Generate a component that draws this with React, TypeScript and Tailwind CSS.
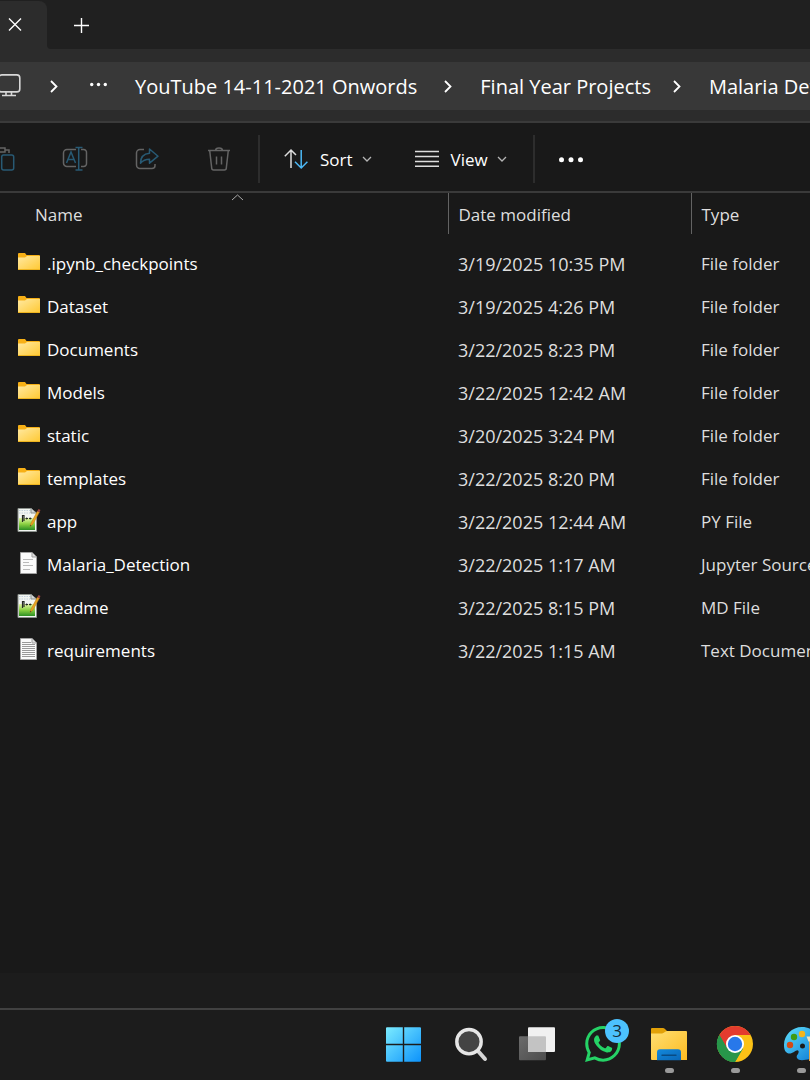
import type { ReactNode } from "react";
import { SiWhatsapp } from "react-icons/si";

type FileKind = "folder" | "editor" | "page" | "text";

const files: { name: string; modified: string; type: string; kind: FileKind }[] = [
  { name: ".ipynb_checkpoints", modified: "3/19/2025 10:35 PM", type: "File folder", kind: "folder" },
  { name: "Dataset", modified: "3/19/2025 4:26 PM", type: "File folder", kind: "folder" },
  { name: "Documents", modified: "3/22/2025 8:23 PM", type: "File folder", kind: "folder" },
  { name: "Models", modified: "3/22/2025 12:42 AM", type: "File folder", kind: "folder" },
  { name: "static", modified: "3/20/2025 3:24 PM", type: "File folder", kind: "folder" },
  { name: "templates", modified: "3/22/2025 8:20 PM", type: "File folder", kind: "folder" },
  { name: "app", modified: "3/22/2025 12:44 AM", type: "PY File", kind: "editor" },
  { name: "Malaria_Detection", modified: "3/22/2025 1:17 AM", type: "Jupyter Source File", kind: "page" },
  { name: "readme", modified: "3/22/2025 8:15 PM", type: "MD File", kind: "editor" },
  { name: "requirements", modified: "3/22/2025 1:15 AM", type: "Text Document", kind: "text" },
];

function FolderIcon() {
  return (
    <>
      <path d="M1 4a1 1 0 0 1 1-1h6l1.500 2H22a1 1 0 0 1 1 1v5H1z" fill="#f7b016" />
      <path d="M1 7.500h7l2-1.500h13v13.500H1z" fill="url(#folder-face)" />
      <path d="M1 19.500h22" stroke="#eeb41f" />
    </>
  );
}

function EditorIcon() {
  return (
    <>
      <path d="M1 .5H14L19.500 5v18.500H1z" fill="#f2f5f2" stroke="#8d938e" />
      <path d="M2 10h16v12H2z" fill="url(#editor-face)" />
      <path d="M2 2.500h12M2 5h13" stroke="#c3d2dc" strokeDasharray="1.500 1" />
      <path d="M14 .5V5h5" fill="#d3d7d9" stroke="#8d938e" />
      <path d="M5.500 14V7.500h1.500V13" fill="none" stroke="#252b24" strokeWidth="1.200" />
      <path d="M8.500 10.500h2.500M12 10.500h2.500M9.700 9.500v2M13.200 9.500v2" stroke="#252b24" />
      <path d="m13 18.500 1-3.500L20.500 3l2 1-6.500 12z" fill="#e8a323" stroke="#b67b18" strokeWidth=".5" />
      <path d="m20.300 3.500 1.200-2.500 2 1-1.300 2.500z" fill="#9d4540" />
      <path d="m13 18.500.4-1.600 1 .6z" fill="#333" />
    </>
  );
}

function PageIcon({ dense = false }: { dense?: boolean }) {
  return (
    <>
      <path d="M3.500 1.500H15L19.500 6v16.500h-16z" fill="#fafafa" stroke="#a1a1a1" />
      <path d="M15 1.500V6h4.500" fill="#e0e0e0" stroke="#a1a1a1" />
      {dense ? (
        <path d="M5 5.500h9M5 7.500h13M5 9.500h13M5 11.500h13M5 13.500h13M5 15.500h13M5 17.500h13M5 19.500h13" stroke="#999" />
      ) : (
        <path d="M6 8.500h10M6 11.500h6M6 14.500h10M6 18.500h7" stroke="#b9b9b9" />
      )}
    </>
  );
}

function FileIcon({ kind }: { kind: FileKind }) {
  return (
    <svg aria-hidden="true" className="h-7 w-6 shrink-0" viewBox="0 0 24 28">
      {kind === "folder" && <FolderIcon />}
      {kind === "editor" && <EditorIcon />}
      {kind === "page" && <PageIcon />}
      {kind === "text" && <PageIcon dense />}
    </svg>
  );
}

function SharedGradients() {
  return (
    <svg aria-hidden="true" className="absolute size-0">
      <defs>
        <linearGradient id="folder-face" x1="0" x2="1" y1="0" y2="1">
          <stop offset="0" stopColor="#ffe9a2" />
          <stop offset="1" stopColor="#ffc933" />
        </linearGradient>
        <linearGradient id="editor-face" x1="0" x2="0" y1="0" y2="1">
          <stop offset="0" stopColor="#e4f7a9" />
          <stop offset=".5" stopColor="#8bd142" />
          <stop offset="1" stopColor="#2c8f24" />
        </linearGradient>
      </defs>
    </svg>
  );
}

function Separator() {
  return (
    <svg aria-hidden="true" className="h-4 w-[10px] shrink-0" fill="none" viewBox="0 0 10 16">
      <path d="m2 3 5.500 5.500L2 14" stroke="#fff" strokeWidth="1.800" />
    </svg>
  );
}

function Caret() {
  return (
    <svg aria-hidden="true" className="h-[10px] w-[10px] shrink-0" fill="none" viewBox="0 0 10 10">
      <path d="m1 3 4 4 4-4" stroke="#b5b5b5" strokeWidth="1.300" />
    </svg>
  );
}

function ToolButton({ children, label }: { children: ReactNode; label: string }) {
  return (
    <button aria-label={label} className="flex h-12 w-[72px] shrink-0 items-center justify-center" disabled type="button">
      <svg aria-hidden="true" className="size-7" fill="none" stroke="#646464" strokeWidth="1.500" viewBox="0 0 28 28">{children}</svg>
    </button>
  );
}

function TitleBar() {
  return (
    <header className="flex h-[49px] bg-[#2c2c2c]">
      <div className="w-[47px] bg-[#202020] pt-px">
        <div className="flex h-12 items-center rounded-tr-lg bg-[#2c2c2c] pl-2">
          <button aria-label="Close tab" type="button">
            <svg aria-hidden="true" className="size-[14px]" viewBox="0 0 14 14">
              <path d="M1 .5l12 12M13 .5l-12 12" stroke="#fff" strokeWidth="1.400" />
            </svg>
          </button>
        </div>
      </div>
      <div className="flex flex-1 items-center rounded-bl bg-[#202020] pl-[26px]">
        <button aria-label="New tab" type="button">
          <svg aria-hidden="true" className="size-4" viewBox="0 0 16 16">
            <path d="M8.500 1v15M1 8.500h15" stroke="#fff" strokeWidth="1.400" />
          </svg>
        </button>
      </div>
    </header>
  );
}

function AddressBar() {
  return (
    <div className="border-b-2 border-[#3a3a3a] bg-[#2c2c2c] pt-[13px] pb-[11px]">
      <nav aria-label="Folder path" className="-ml-[3px] flex h-12 items-center overflow-hidden bg-[#383838] text-[20px] leading-7 whitespace-nowrap text-white">
        <svg aria-hidden="true" className="mr-7 size-6 shrink-0" fill="none" stroke="#d8d8d8" strokeWidth="1.600" viewBox="0 0 24 24">
          <rect height="17" rx="3" width="21" x="1.800" y="0.900" />
          <path d="M9 18v3M14.500 18v3M5 21.500h14" />
        </svg>
        <Separator />
        <button aria-label="More folders" className="mr-[27px] ml-[30px]" type="button">
          <svg aria-hidden="true" className="h-5 w-[19px]" fill="#fff" viewBox="0 0 19 20">
            <circle cx="2.700" cy="8.500" r="1.700" />
            <circle cx="9.500" cy="8.500" r="1.700" />
            <circle cx="16.300" cy="8.500" r="1.700" />
          </svg>
        </button>
        <a className="mr-[26px] pt-0.5" href="#youtube">YouTube 14-11-2021 Onwords</a>
        <Separator />
        <a className="mr-[21px] ml-[27px] pt-0.5" href="#projects">Final Year Projects</a>
        <Separator />
        <a className="ml-[27px] pt-0.5" href="#malaria">Malaria Detection</a>
      </nav>
    </div>
  );
}

function Toolbar() {
  return (
    <div className="flex h-[70px] items-center overflow-hidden border-b-2 border-[#3a3a3a] pt-1 text-[17px] leading-6 text-white">
      <div className="-ml-[33px] flex">
        <ToolButton label="Paste">
          <path d="M4 5h4M4 5v18h6M8 3h8v4H8zM16 5h4v3" />
          <rect height="15" rx="2" stroke="#285a74" width="12" x="12.700" y="10" />
        </ToolButton>
        <ToolButton label="Rename">
          <path d="M15 4.500H6a3.500 3.500 0 0 0-3.500 3.500v10A3.500 3.500 0 0 0 6 21.500h9M20 4.500h2.500A3 3 0 0 1 25.500 8v10a3 3 0 0 1-3 3.500H20" />
          <path d="m5.500 18 4.500-11 4.500 11M7 14.500h6M17.700 2.500v22.500M14.500 2.500h7M14.500 25h7" stroke="#285a74" />
        </ToolButton>
        <ToolButton label="Share">
          <path d="M11 4.500H7A3.500 3.500 0 0 0 3.500 8v12A3.500 3.500 0 0 0 7 23.500h12a3 3 0 0 0 3-3V19" />
          <path d="M16.500 4 25 11.200l-8.500 7v-4c-4 0-6.500 1-9 4 0-6 3-9.500 9-10z" stroke="#285a74" strokeLinejoin="round" />
        </ToolButton>
        <ToolButton label="Delete">
          <path d="M3 5.500h22M10.500 5.500c0-3.500 7-3.500 7 0M4.700 5.500l2 17.500a2 2 0 0 0 2 2h10.600a2 2 0 0 0 2-2l2-17.500M11.500 11.500v8M16.500 11.500v8" />
        </ToolButton>
      </div>
      <div className="ml-[3px] h-12 w-[2px] shrink-0 bg-[#2d2d2d]" />
      <button className="ml-6 flex items-center" type="button">
        <svg aria-hidden="true" className="mr-3 size-6" fill="none" strokeWidth="1.500" viewBox="0 0 24 24">
          <path d="M7 21V3M.8 9.200 7 3l5 5" stroke="#ddd" />
          <path d="M17.200 3v18M11 14.800l6.200 6.200 6.200-6.200" stroke="#4cb8f5" />
        </svg>
        <span className="mr-[9px] pt-0.5">Sort</span>
        <Caret />
      </button>
      <button className="ml-[43px] flex items-center" type="button">
        <svg aria-hidden="true" className="mr-3 size-6" stroke="#ddd" strokeWidth="1.500" viewBox="0 0 24 24">
          <path d="M0 4.500h24M0 9.500h24M0 14.500h24M0 19.200h24" />
        </svg>
        <span className="mr-[9px] pt-0.5">View</span>
        <Caret />
      </button>
      <div className="ml-[26px] h-12 w-[2px] shrink-0 bg-[#2d2d2d]" />
      <button aria-label="More options" className="ml-[22px]" type="button">
        <svg aria-hidden="true" className="h-6 w-7" fill="#fff" viewBox="0 0 28 24">
          <circle cx="4.500" cy="12.800" r="2.500" />
          <circle cx="14" cy="12.800" r="2.500" />
          <circle cx="23.500" cy="12.800" r="2.500" />
        </svg>
      </button>
    </div>
  );
}

function FileTable() {
  return (
    <main className="flex-1 overflow-hidden">
      <table className="w-full table-fixed border-collapse text-left text-[17px] leading-6 whitespace-nowrap text-[#dedede]">
        <colgroup>
          <col className="w-[448px]" />
          <col className="w-[243px]" />
          <col />
        </colgroup>
        <thead>
          <tr className="h-[41px]">
            <th className="relative pt-0.5 pl-[35px] font-normal" scope="col">
              <button type="button">Name</button>
              <svg aria-hidden="true" className="absolute top-0 left-[231px] h-2 w-3" fill="none" viewBox="0 0 12 8">
                <path d="m1 7 5.500-5L12 7" stroke="#aaa" />
              </svg>
            </th>
            <th className="border-l border-[#636363] pt-0.5 pl-[10px] font-normal" scope="col"><button type="button">Date modified</button></th>
            <th className="border-l border-[#636363] pt-0.5 pl-[10px] font-normal" scope="col"><button type="button">Type</button></th>
          </tr>
        </thead>
        <tbody>
          <tr aria-hidden="true" className="h-2"><td colSpan={3} /></tr>
          {files.map((file) => (
            <tr className="h-[43px]" key={file.name}>
              <td className="pl-[17px] text-white">
                <div className="flex items-center gap-[6px]">
                  <FileIcon kind={file.kind} />
                  <span>{file.name}</span>
                </div>
              </td>
              <td className="pl-[10px] text-[18px]">{file.modified}</td>
              <td className="overflow-hidden pl-[10px]">{file.type}</td>
            </tr>
          ))}
        </tbody>
      </table>
    </main>
  );
}

function TaskButton({ badge, children, label, running = false }: { badge?: string; children: ReactNode; label: string; running?: boolean }) {
  return (
    <button aria-label={label} className="relative h-[70px] w-[66px] shrink-0" type="button">
      {children}
      {badge ? <span className="absolute top-[9px] left-[35px] flex size-6 items-center justify-center rounded-full bg-[#4cc2ff] text-[17px] leading-6 text-[#142b38]">{badge}</span> : null}
      {running ? <span className="absolute bottom-[7px] left-[29px] h-[5px] w-[9px] rounded-full bg-[#9a9a9a]" /> : null}
    </button>
  );
}

function Drawing({ children }: { children: ReactNode }) {
  return <svg aria-hidden="true" className="h-[70px] w-[66px]" viewBox="0 0 66 70">{children}</svg>;
}

function Taskbar() {
  return (
    <footer className="flex h-[72px] overflow-hidden border-t-2 border-[#414141] bg-[#1c1c1c] pl-[372px]">
      <TaskButton label="Start">
        <Drawing>
          <defs>
            <linearGradient gradientUnits="userSpaceOnUse" id="start" x1="14" x2="49" y1="17" y2="52">
              <stop offset="0" stopColor="#7cecff" />
              <stop offset="1" stopColor="#0c92fb" />
            </linearGradient>
          </defs>
          <path d="M15 17.300h15.800v16.500H14V18.300a1 1 0 0 1 1-1zM32.200 17.300H48a1 1 0 0 1 1 1v15.500H32.200zM14 35.200h16.800v16.600H15a1 1 0 0 1-1-1zM32.200 35.200H49v15.600a1 1 0 0 1-1 1H32.200z" fill="url(#start)" />
        </Drawing>
      </TaskButton>
      <TaskButton label="Search">
        <Drawing>
          <path d="m40 41 7 8" stroke="#d5d5d5" strokeLinecap="round" strokeWidth="4" />
          <circle cx="31" cy="31.700" fill="#444" r="12.200" stroke="#e6e6e6" strokeWidth="3.400" />
        </Drawing>
      </TaskButton>
      <TaskButton label="Task view">
        <Drawing>
          <defs>
            <linearGradient id="panes" x1="0" x2="1" y1="0" y2="1">
              <stop offset="0" stopColor="#6c6c6c" />
              <stop offset="1" stopColor="#4c4c4c" />
            </linearGradient>
          </defs>
          <rect fill="url(#panes)" height="24" rx="1" width="27" x="15" y="26.300" />
          <rect fill="#f1f1f1" height="24.700" rx="1" width="27" x="24" y="17.200" />
          <path d="M24 26.300h17a1 1 0 0 1 1 1v14.600H25a1 1 0 0 1-1-1z" fill="#c3c3c3" />
        </Drawing>
      </TaskButton>
      <TaskButton badge="3" label="WhatsApp">
        <SiWhatsapp aria-hidden="true" className="mx-auto mb-0.5 size-9 text-[#25d366]" />
      </TaskButton>
      <TaskButton label="File Explorer" running>
        <Drawing>
          <defs>
            <linearGradient id="explorer" x1="0" x2="1" y1="0" y2="1">
              <stop offset="0" stopColor="#ffdf73" />
              <stop offset="1" stopColor="#fdbb20" />
            </linearGradient>
            <linearGradient id="tray" x1="0" x2="1" y1="0" y2="1">
              <stop offset="0" stopColor="#1389dc" />
              <stop offset="1" stopColor="#0a67b7" />
            </linearGradient>
          </defs>
          <path d="M15 19a1 1 0 0 1 1-1h11q1 0 2 1l2 2v5H15z" fill="#e2a108" />
          <path d="M15 23.500h11c2 0 3-2.500 5-2.500h19a1 1 0 0 1 1 1v28H16a1 1 0 0 1-1-1z" fill="url(#explorer)" />
          <path d="M21 50.300v-8a3 3 0 0 1 3-3h18a3 3 0 0 1 3 3v8z" fill="url(#tray)" />
          <path d="M26 45.300h14" stroke="#084b83" strokeLinecap="round" strokeWidth="1.400" />
        </Drawing>
      </TaskButton>
      <TaskButton label="Google Chrome" running>
        <Drawing>
          <circle cx="33" cy="34" fill="#fbc116" r="18" />
          <path d="M33 34 17.400 25A18 18 0 0 0 33 52l7.800-13.500z" fill="#27964a" />
          <path d="M33 34v-9h15.600A18 18 0 0 0 17.400 25l7.800 13.500z" fill="#e33b2e" />
          <path d="M17.400 25 25.200 38.500 33 43 41 38.500 33 52A18 18 0 0 1 17.400 25z" fill="#27964a" />
          <circle cx="33" cy="34" fill="#fff" r="9" />
          <circle cx="33" cy="34" fill="#2878ea" r="7.200" />
        </Drawing>
      </TaskButton>
      <TaskButton label="Paint" running>
        <Drawing>
          <defs>
            <linearGradient id="palette" x1="0" x2="1" y1="0" y2="1">
              <stop offset="0" stopColor="#5fe0fc" />
              <stop offset="1" stopColor="#0a76d3" />
            </linearGradient>
          </defs>
          <path d="M34 17c-10 0-18 8-18 18 0 4 1 7.500 4.500 8.500C25 44.500 29 38 30.500 41c1 3-3 4-1.500 7 2 3.500 8 2 13 1 6-2 9-9 9-15 0-10-7-17-17-17zM34.500 33.500a2.300 2.300 0 1 1 0 5 2.300 2.300 0 0 1 0-5z" fill="url(#palette)" fillRule="evenodd" />
          <circle cx="26" cy="27" fill="#3f9b13" r="3.200" />
          <circle cx="34" cy="24" fill="#f3b51b" r="3.200" />
          <circle cx="22" cy="35" fill="#d34b16" r="3.200" />
          <path d="m41 28 2-3 3 3v23h-5z" fill="#e7a74a" />
          <path d="M38.500 26.500h5v5h-3z" fill="#f2e3bd" />
        </Drawing>
      </TaskButton>
    </footer>
  );
}

export default function App() {
  return (
    <div className="flex min-h-screen flex-col overflow-hidden bg-[#191919] font-['Open_Sans','Noto_Sans',sans-serif]">
      <SharedGradients />
      <TitleBar />
      <AddressBar />
      <Toolbar />
      <FileTable />
      <div className="h-[35px] bg-[#1c1c1c]" />
      <Taskbar />
    </div>
  );
}
